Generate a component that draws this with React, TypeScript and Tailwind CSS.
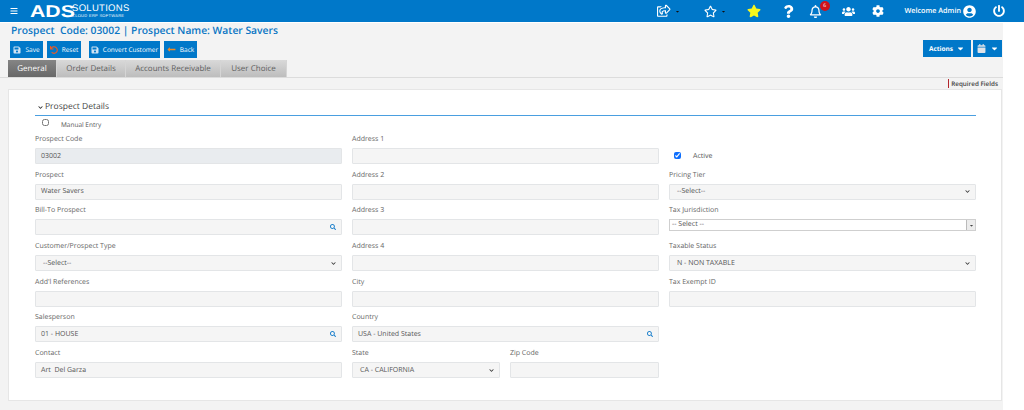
import {
  FaRegShareSquare,
  FaRegStar,
  FaStar,
  FaQuestion,
  FaRegBell,
  FaUsers,
  FaCog,
  FaUserCircle,
  FaPowerOff,
  FaSave,
  FaUndo,
  FaLongArrowAltLeft,
  FaCaretDown,
  FaSearch,
  FaChevronDown,
  FaBars,
  FaCalendar,
} from "react-icons/fa";

function Label({ children }: { children: React.ReactNode }) {
  return <div className="h-[10px] text-[7px] leading-[10px] text-[#666]">{children}</div>;
}

function Input({
  value,
  search,
  select,
  shade,
}: {
  value?: string;
  search?: boolean;
  select?: boolean;
  shade?: boolean;
}) {
  return (
    <div
      className={`mt-[3px] h-[16px] flex items-center justify-between border border-[#e3e5e7] rounded-[1px] pr-[3px] text-[7px] text-[#555] ${
        shade ? "bg-[#e9ecef]" : "bg-[#f5f5f5]"
      } ${select ? "pl-[7px]" : "pl-[5px]"}`}
    >
      <span className="whitespace-pre pt-[2px]">{value}</span>
      {search && <FaSearch className="text-[6px] text-[#1b7fcb] mr-[2px]" />}
      {select && <FaChevronDown className="text-[5px] text-[#333] mr-[2px]" />}
    </div>
  );
}

function Field(props: {
  label: string;
  value?: string;
  search?: boolean;
  select?: boolean;
  shade?: boolean;
  className?: string;
}) {
  return (
    <div className={`h-[35.7px] pt-[2px] ${props.className ?? ""}`}>
      <Label>{props.label}</Label>
      <Input value={props.value} search={props.search} select={props.select} shade={props.shade} />
    </div>
  );
}

function ToolButton({ icon, text, className }: { icon: React.ReactNode; text: string; className?: string }) {
  return (
    <div
      className={`h-[17px] flex items-center justify-center gap-[4px] bg-[#0078c9] text-white text-[6.5px] ${className ?? ""}`}
    >
      {icon}
      <span>{text}</span>
    </div>
  );
}

const tabs = ["General", "Order Details", "Accounts Receivable", "User Choice"];

export default function App() {
  return (
    <div className="w-[1024px] h-[410px] overflow-hidden bg-white font-['Open_Sans',sans-serif] [text-rendering:geometricPrecision]">
      {/* top bar */}
      <div className="h-[22px] bg-[#0078c9] flex items-center text-white relative">
        <FaBars className="ml-[10px] text-[8px]" />
        <div className="ml-[12px] flex items-center">
          <span className="font-['Liberation_Sans',sans-serif] font-bold text-[17px] leading-none scale-x-125 origin-left w-[42px]">
            ADS
          </span>
          <div className="flex flex-col font-['Liberation_Sans',sans-serif]">
            <span className="text-[9.5px] leading-[8px] tracking-[0.3px]">SOLUTIONS</span>
            <span className="text-[4px] leading-[5px] tracking-[0.3px]">CLOUD ERP SOFTWARE</span>
          </div>
        </div>
        <div className="ml-auto flex items-center mr-[19px] h-full">
          <FaRegShareSquare className="text-[13.5px]" />
          <FaCaretDown className="text-[5px] text-[#111] ml-[4px]" />
          <FaRegStar className="text-[13px] ml-[24px]" />
          <FaCaretDown className="text-[5px] text-[#111] ml-[4px]" />
          <FaStar className="text-[14px] text-[#f7f71c] ml-[21px]" />
          <FaQuestion className="text-[13px] ml-[21px]" />
          <div className="relative ml-[14px]">
            <FaRegBell className="text-[13px]" />
            <span className="absolute -top-[4px] left-[11px] w-[10px] h-[10px] rounded-full bg-[#d0121b] text-[5px] leading-[10px] text-center">
              6
            </span>
          </div>
          <FaUsers className="text-[13px] ml-[20px]" />
          <FaCog className="text-[12px] ml-[17px]" />
          <span className="ml-[21px] text-[7.2px] font-semibold">Welcome Admin</span>
          <FaUserCircle className="text-[13px] ml-[2px]" />
          <FaPowerOff className="text-[12px] ml-[17px]" />
        </div>
      </div>

      {/* page */}
      <div className="mt-[1px] w-[1003px] h-[387px] bg-[#f3f3f3] flex flex-col">
        <div className="pl-[11px] h-[18px] text-[10.3px] leading-[16px] font-semibold text-[#0a76c4] whitespace-pre">
          Prospect  Code: 03002 | Prospect Name: Water Savers
        </div>
        <div className="flex items-start h-[19px] pl-[10px] pr-[1px]">
          <ToolButton icon={<FaSave className="text-[8px] text-[#cfe3f3]" />} text="Save" className="w-[33px]" />
          <ToolButton
            icon={<FaUndo className="text-[8px] text-[#ef5a24]" />}
            text="Reset"
            className="w-[34px] ml-[4px]"
          />
          <ToolButton
            icon={<FaSave className="text-[8px] text-[#cfe3f3]" />}
            text="Convert Customer"
            className="w-[71px] ml-[8px]"
          />
          <ToolButton
            icon={<FaLongArrowAltLeft className="text-[9px] text-[#f08a24]" />}
            text="Back"
            className="w-[33px] ml-[4px]"
          />
          <div className="ml-auto flex gap-[2px] -mt-[1px]">
            <div className="w-[48px] h-[17px] bg-[#0078c9] text-white text-[6.5px] font-bold flex items-center justify-center gap-[3px]">
              Actions <FaCaretDown className="text-[9px]" />
            </div>
            <div className="w-[29px] h-[17px] bg-[#0078c9] text-white flex items-center justify-center gap-[4px]">
              <FaCalendar className="text-[9px] text-[#dfe3e8]" />
              <FaCaretDown className="text-[9px]" />
            </div>
          </div>
        </div>
        <div className="flex h-[18px] pl-[8px] border-b border-[#dcdcdc] text-[8px]">
          {tabs.map((t, i) => (
            <div
              key={t}
              className={`h-[17px] flex items-center justify-center border-r border-[#d5d5d5] ${
                i === 0
                  ? "w-[49px] bg-gradient-to-b from-[#858585] to-[#686868] text-white"
                  : "bg-gradient-to-b from-[#d9d9d9] to-[#bdbdbd] text-[#5f5f5f] " +
                    (i === 1 ? "w-[69px]" : i === 2 ? "w-[95px]" : "w-[66px]")
              }`}
            >
              {t}
            </div>
          ))}
        </div>
        <div className="h-[11px] flex justify-end pr-[5px] text-[6.3px] font-semibold text-[#444]">
          <span className="border-l border-[#b3262c] pl-[2px] h-[9px] leading-[9px] mt-[1px]">Required Fields</span>
        </div>

        {/* panel */}
        <div className="ml-[8px] w-[994px] h-[312px] bg-white border border-[#e6e6e6] pt-[9px] pl-[26px] pr-[25px]">
          <div className="h-[17px] border-b border-[#4a9fe0] flex items-center pl-[3px] gap-[2px] text-[8.5px] text-[#444]">
            <FaChevronDown className="text-[5px] text-[#222]" />
            <span>Prospect Details</span>
          </div>
          <div className="grid grid-cols-[307px_307px_307px] gap-x-[10px]">
            <div>
              <div className="h-[17px] flex items-center pl-[7px] text-[6.5px] text-[#555]">
                <input type="checkbox" className="w-[7px] h-[7px] m-0 mb-[4px]" readOnly />
                <span className="ml-[12px] pt-[1px]">Manual Entry</span>
              </div>
              <Field label="Prospect Code" value="03002" shade />
              <Field label="Prospect" value="Water Savers" />
              <Field label="Bill-To Prospect" search />
              <Field label="Customer/Prospect Type" value="--Select--" select />
              <Field label="Add'l References" />
              <Field label="Salesperson" value="01 - HOUSE" search />
              <Field label="Contact" value="Art  Del Garza" />
            </div>
            <div className="pt-[17px]">
              <Field label="Address 1" />
              <Field label="Address 2" />
              <Field label="Address 3" />
              <Field label="Address 4" />
              <Field label="City" />
              <Field label="Country" value="USA - United States" search />
              <div className="flex gap-[10px]">
                <Field label="State" value="CA - CALIFORNIA" select className="w-[148px]" />
                <Field label="Zip Code" className="w-[149px]" />
              </div>
            </div>
            <div className="pt-[17px]">
              <div className="h-[35.7px] flex items-end pb-[6px] pl-[5px] text-[7px] text-[#555]">
                <input type="checkbox" checked readOnly className="w-[7px] h-[7px] m-0 mb-[4px] accent-[#0d6efd]" />
                <span className="ml-[12px]">Active</span>
              </div>
              <Field label="Pricing Tier" value="--Select--" select />
              <div className="h-[35.7px] pt-[2px]">
                <Label>Tax Jurisdiction</Label>
                <div className="mt-[3px] h-[12px] flex items-center bg-white border border-[#cfcfcf] text-[7px] text-[#555] pl-[2px]">
                  <span>-- Select --</span>
                  <div className="ml-auto h-full w-[9px] bg-[#ececec] border-l border-[#bbb] flex items-center justify-center">
                    <FaCaretDown className="text-[5px] text-[#444]" />
                  </div>
                </div>
              </div>
              <Field label="Taxable Status" value="N - NON TAXABLE" select />
              <Field label="Tax Exempt ID" />
            </div>
          </div>
        </div>
      </div>
    </div>
  );
}
